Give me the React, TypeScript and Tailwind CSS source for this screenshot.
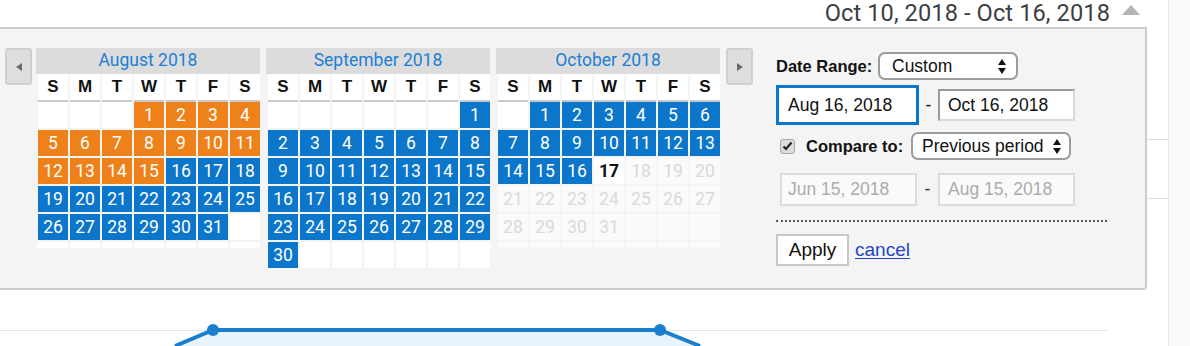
import React from 'react'

type Kind = 'empty' | 'orange' | 'blue' | 'today' | 'future'
type Cell = { d?: number; kind: Kind }

const DAYS = ['S', 'M', 'T', 'W', 'T', 'F', 'S']

// builds the weeks of a month; kindOf decides the colour of each day
function weeks(start: number, len: number, kindOf: (d: number) => Kind, padKind: Kind = 'empty') {
  const cells: Cell[] = []
  for (let i = 0; i < start; i++) cells.push({ kind: 'empty' })
  for (let d = 1; d <= len; d++) cells.push({ d, kind: kindOf(d) })
  while (cells.length % 7) cells.push({ kind: padKind })
  const rows: Cell[][] = []
  for (let i = 0; i < cells.length; i += 7) rows.push(cells.slice(i, i + 7))
  return rows
}

const MONTHS = [
  { title: 'August 2018', rows: weeks(3, 31, (d) => (d <= 15 ? 'orange' : 'blue')), pad: 'empty' as Kind },
  { title: 'September 2018', rows: weeks(6, 30, () => 'blue'), pad: 'empty' as Kind },
  {
    title: 'October 2018',
    rows: weeks(1, 31, (d) => (d <= 16 ? 'blue' : d === 17 ? 'today' : 'future'), 'future'),
    pad: 'future' as Kind,
  },
]

const cellCls: Record<Kind, string> = {
  empty: 'bg-white',
  orange: 'bg-[#ee8119] text-white',
  blue: 'bg-[#0b76ca] text-white',
  today: 'bg-white text-[#111] font-bold',
  future: 'bg-[#fafafa] text-[#d9d9d9]',
}

function Month({ title, rows, pad }: { title: string; rows: Cell[][]; pad: Kind }) {
  return (
    <div className="w-[224px]">
      <div className="h-[26px] bg-[#dcdcdc] flex items-center justify-center text-[17.5px] text-[#1c7fd5] font-['Roboto',sans-serif] leading-none">
        {title}
      </div>
      <div className="pl-[2px] grid grid-cols-[repeat(7,30px)] gap-x-[2px]">
        {DAYS.map((d, i) => (
          <div
            key={i}
            className="h-[28px] bg-white border-b-2 border-[#c9c9c9] flex items-center justify-center text-[17px] font-bold text-[#111] font-['Liberation_Sans',Arial,sans-serif]"
          >
            {d}
          </div>
        ))}
      </div>
      <div className="pl-[2px] grid grid-cols-[repeat(7,30px)] gap-[2px]">
        {rows.flat().map((c, i) => (
          <div
            key={i}
            className={`h-[26px] flex items-center justify-center text-[17.5px] font-['Roboto',sans-serif] ${cellCls[c.kind]}`}
          >
            {c.d}
          </div>
        ))}
        {rows.length < 6 &&
          DAYS.map((_, i) => <div key={'p' + i} className={`h-[6px] ${cellCls[pad]}`} />)}
      </div>
    </div>
  )
}

function NavButton({ dir }: { dir: 'prev' | 'next' }) {
  return (
    <div className="w-[27px] h-[37px] rounded-[3px] border-2 border-[#cfcfcf] bg-[#dedede] flex items-center justify-center">
      <svg width="8" height="10" viewBox="0 0 8 10">
        {dir === 'prev' ? (
          <polygon points="7,1 7,9 1,5" fill="#6a6a6a" />
        ) : (
          <polygon points="1,1 1,9 7,5" fill="#6a6a6a" />
        )}
      </svg>
    </div>
  )
}

function SelectArrows() {
  return (
    <svg width="8" height="15" viewBox="0 0 8 15" className="shrink-0">
      <polygon points="4,0 8,6 0,6" fill="#111" />
      <polygon points="0,9 8,9 4,15" fill="#111" />
    </svg>
  )
}

export default function App() {
  return (
    <div className="relative w-[1190px] h-[346px] overflow-hidden bg-white flex font-['Liberation_Sans',Arial,sans-serif]">
      {/* page under the dropdown */}
      <div className="w-[1168px] shrink-0 flex flex-col">
        <div className="h-[28px] flex items-center justify-end pr-[28px] gap-[12px]">
          <span className="text-[23.6px] leading-none text-[#3a3f45] font-['Roboto',sans-serif] tracking-[0.1px]">
            Oct 10, 2018 - Oct 16, 2018
          </span>
          <svg width="18" height="10" viewBox="0 0 18 10" className="mb-[8px]">
            <polygon points="9,0 18,10 0,10" fill="#b4b4b4" />
          </svg>
        </div>
        <div className="h-[112px] border-b border-[#dcdfe3]" />
        <div className="h-[59px] border-b border-[#dcdfe3]" />
        <svg width="1108" height="147" viewBox="0 0 1108 147">
          <line x1="0" y1="131.5" x2="1108" y2="131.5" stroke="#e6e6e6" strokeWidth="1" />
          <polygon points="175,147 213,131 660,131 700,147" fill="#e9f3fc" />
          <polyline points="175,147 213,131 660,131 700,147" fill="none" stroke="#1b7fd0" strokeWidth="4" />
          <circle cx="213" cy="131" r="6" fill="#1b7fd0" />
          <circle cx="660" cy="131" r="6" fill="#1b7fd0" />
        </svg>
      </div>
      <div className="flex-1 border-l border-[#e8e8e8] bg-[#fafafa]" />

      {/* date range dropdown */}
      <div className="absolute left-0 top-[27px] w-[1147px] h-[263px] bg-[#f4f4f4] border-t-2 border-r-2 border-b-2 border-[#c9cdd2] rounded-br-[4px] flex pt-[19px] pl-[5px]">
        <NavButton dir="prev" />
        <div className="flex gap-[6px] ml-[4px]">
          {MONTHS.map((m) => (
            <Month key={m.title} {...m} />
          ))}
        </div>
        <div className="ml-[6px]">
          <NavButton dir="next" />
        </div>

        <div className="ml-[23px] w-[331px] flex flex-col text-[17.5px] text-[#111]">
          <div className="flex items-center h-[28px] mt-[4px]">
            <span className="font-bold text-[16.5px] w-[102px]">Date Range:</span>
            <div className="w-[140px] h-[28px] border-2 border-[#9c9c9c] rounded-[7px] bg-white flex items-center justify-between pl-[12px] pr-[10px]">
              <span>Custom</span>
              <SelectArrows />
            </div>
          </div>

          <div className="flex items-center mt-[5px] h-[40px]">
            <div className="w-[143px] h-[40px] border-[3px] border-[#0b76ca] bg-white flex items-center pl-[9px]">
              Aug 16, 2018
            </div>
            <span className="w-[19px] text-center">-</span>
            <div className="w-[137px] h-[32px] border-2 border-t-[#9a9a9a] border-l-[#9a9a9a] border-r-[#dadada] border-b-[#dadada] bg-white flex items-center pl-[8px]">
              Oct 16, 2018
            </div>
          </div>

          <div className="flex items-center mt-[7px] h-[28px]">
            <div className="ml-[4px] w-[15px] h-[15px] rounded-[3px] border border-[#a8a8a8] bg-[#dcdcdc] flex items-center justify-center">
              <svg width="11" height="10" viewBox="0 0 11 10">
                <polyline points="1.5,5.5 4,8 9.5,1.5" fill="none" stroke="#222" strokeWidth="2.2" />
              </svg>
            </div>
            <span className="font-bold text-[16.5px] ml-[11px] w-[105px]">Compare to:</span>
            <div className="w-[160px] h-[28px] border-2 border-[#9c9c9c] rounded-[7px] bg-white flex items-center justify-between pl-[9px] pr-[8px]">
              <span>Previous period</span>
              <SelectArrows />
            </div>
          </div>

          <div className="flex items-center mt-[13px] h-[33px] text-[#ababab]">
            <div className="ml-[4px] w-[137px] h-[33px] border-2 border-[#dcdcdc] bg-[#fafafa] flex items-center pl-[6px]">
              Jun 15, 2018
            </div>
            <span className="w-[21px] text-center text-[#333]">-</span>
            <div className="w-[137px] h-[33px] border-2 border-[#dcdcdc] bg-[#fafafa] flex items-center pl-[8px]">
              Aug 15, 2018
            </div>
          </div>

          <div className="mt-[14px] border-t-2 border-dotted border-[#555]" />

          <div className="flex items-center mt-[12px] gap-[6px]">
            <div className="w-[73px] h-[32px] border-2 border-[#c8c8c8] bg-white flex items-center justify-center text-[19px]">
              Apply
            </div>
            <span className="text-[19px] text-[#2346c8] underline underline-offset-2">cancel</span>
          </div>
        </div>
      </div>
    </div>
  )
}
